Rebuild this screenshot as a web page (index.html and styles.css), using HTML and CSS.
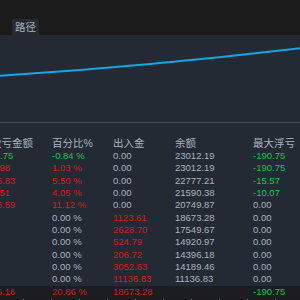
FILE: index.html
```html
<!DOCTYPE html>
<html lang="zh">
<head>
    <meta charset="UTF-8">
    <meta name="viewport" content="width=device-width, initial-scale=1.0">
    <title>路径</title>
    <link rel="stylesheet" href="styles.css">
</head>
<body>
    <div class="topbar">
        <div class="tab">路径</div>
    </div>

    <div class="chart">
        <svg width="300" height="87" viewBox="0 0 300 87">
            <path d="M-2,41 Q150,31 302,13" fill="none" stroke="#0fa9e6" stroke-width="2"/>
        </svg>
    </div>

    <div class="report">
        <div class="row head">
            <span>盈亏金额</span><span>百分比%</span><span>出入金</span><span>余额</span><span>最大浮亏</span>
        </div>
        <div class="row"><span class="up">-192.75</span><span class="up">-0.84 %</span><span>0.00</span><span>23012.19</span><span class="up">-190.75</span></div>
        <div class="row"><span class="down">238.98</span><span class="down">1.03 %</span><span>0.00</span><span>23012.19</span><span class="up">-190.75</span></div>
        <div class="row"><span class="down">1266.83</span><span class="down">5.50 %</span><span>0.00</span><span>22777.21</span><span class="up">-15.57</span></div>
        <div class="row"><span class="down">938.51</span><span class="down">4.05 %</span><span>0.00</span><span>21590.38</span><span class="up">-10.07</span></div>
        <div class="row"><span class="down">2426.59</span><span class="down">11.12 %</span><span>0.00</span><span>20749.87</span><span>0.00</span></div>
        <div class="row"><span></span><span>0.00 %</span><span class="down">1123.61</span><span>18673.28</span><span>0.00</span></div>
        <div class="row"><span></span><span>0.00 %</span><span class="down">2628.70</span><span>17549.67</span><span>0.00</span></div>
        <div class="row"><span></span><span>0.00 %</span><span class="down">524.79</span><span>14920.97</span><span>0.00</span></div>
        <div class="row"><span></span><span>0.00 %</span><span class="down">206.72</span><span>14396.18</span><span>0.00</span></div>
        <div class="row"><span></span><span>0.00 %</span><span class="down">3052.63</span><span>14189.46</span><span>0.00</span></div>
        <div class="row"><span></span><span>0.00 %</span><span class="down">11136.83</span><span>11136.83</span><span>0.00</span></div>
        <div class="row total"><span class="down">4836.16</span><span class="down">20.86 %</span><span class="down">18673.28</span><span></span><span class="up">-190.75</span></div>
    </div>

    <div class="scale"></div>
</body>
</html>
```

FILE: styles.css
```css
body {
    margin: 0;
    width: 300px;
    height: 300px;
    overflow: hidden;
    background-color: #232a33;
    font-family: "Liberation Sans", "Noto Sans CJK SC", sans-serif;
    color: #a9b3c0;
}

.topbar {
    height: 35px;
    background-color: #1b1b1b;
    display: flex;
    align-items: flex-end;
    padding-left: 12px;
    box-sizing: border-box;
}

.tab {
    height: 16px;
    line-height: 16px;
    padding: 0 3px;
    font-size: 10.5px;
    background-color: #262b32;
    color: #a8b0b9;
    border-radius: 2px 2px 0 0;
}

.chart {
    height: 87px;
    overflow: hidden;
}

.chart svg {
    display: block;
}

.report {
    border-top: 1px solid #4b5057;
    padding-top: 14px;
    margin-left: -25px;
}

.row {
    display: grid;
    grid-template-columns: 77px 61px 62px 78px 1fr;
    height: 12.33px;
    line-height: 12.33px;
    font-size: 9.5px;
    white-space: nowrap;
}

.row span:first-child {
    padding-left: 6px;
}

.row.head {
    height: 13px;
    line-height: 13px;
    font-size: 10.5px;
}

.row.head span:first-child {
    padding-left: 16px;
}

.row.total {
    background-color: #1b1d20;
}

.up {
    color: #17c256;
}

.down {
    color: #d21c1c;
}

.scale {
    height: 4px;
    background-color: #1b1b1b;
    background-image: linear-gradient(to right, #7d8288 1px, transparent 1px);
    background-size: 28px 3px;
    background-position: 23px 1px;
    background-repeat: repeat-x;
}
```
